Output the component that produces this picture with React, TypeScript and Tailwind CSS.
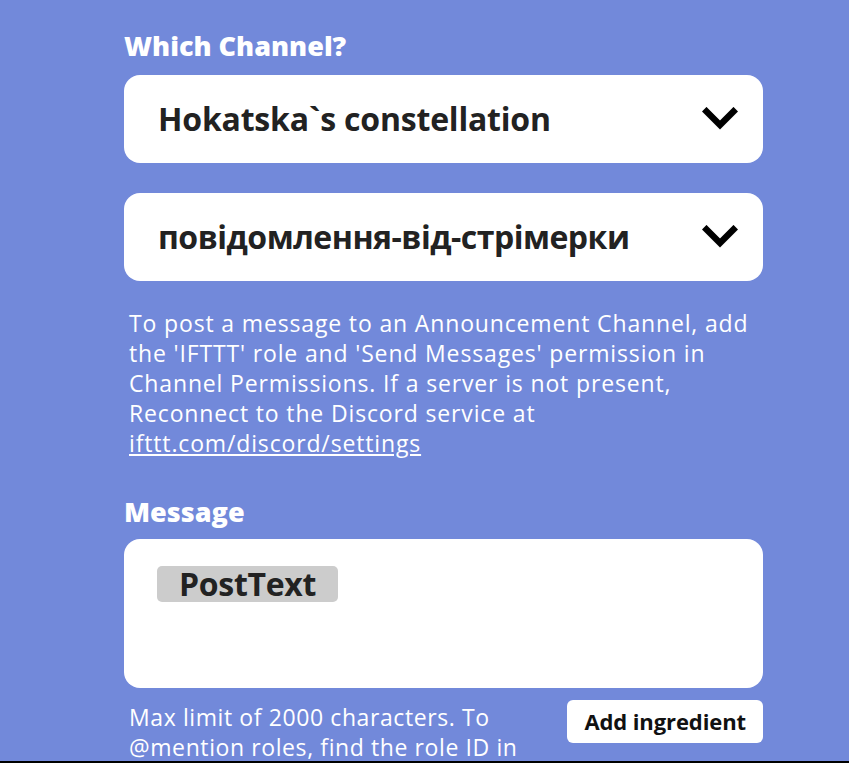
import React from "react";

const font = { fontFamily: "'Open Sans', 'Noto Sans', sans-serif" };

const Chevron = () => (
  <svg width="36" height="24" viewBox="0 0 36 24" fill="none">
    <path d="M4.5 4.5 L18 18 L31.5 4.5" stroke="#000" strokeWidth="6.5" strokeLinecap="square" />
  </svg>
);

const Select = ({ value, tight }: { value: string; tight?: boolean }) => (
  <div className="flex h-[88px] items-center justify-between rounded-2xl bg-white pl-[34px] pr-[25px]">
    <span
      className={
        tight
          ? "text-[32px] font-bold leading-none tracking-[-0.5px] text-[#222]"
          : "text-[32px] font-bold leading-none tracking-[-0.2px] text-[#222]"
      }
    >
      {value}
    </span>
    <Chevron />
  </div>
);

export default function App() {
  return (
    <div
      className="h-[763px] w-full overflow-hidden border-b-2 border-black bg-[#7289da]"
      style={font}
    >
      <div className="ml-[124px] w-[639px] pt-[30px]">
        <h2 className="mb-[14px] text-[27px] font-extrabold leading-[31px] text-white">
          Which Channel?
        </h2>
        <Select value="Hokatska`s constellation" />
        <div className="h-[30px]" />
        <Select value="повідомлення-від-стрімерки" tight />

        <p className="mt-[27px] w-[630px] pl-[5px] text-[23px] leading-[30px] tracking-[0.85px] text-white">
          To post a message to an Announcement Channel, add the 'IFTTT' role and 'Send Messages'
          permission in Channel Permissions. If a server is not present, Reconnect to the Discord
          service at{" "}
          <a className="underline" href="#">
            ifttt.com/discord/settings
          </a>
        </p>

        <h2 className="mt-[38px] mb-[12px] text-[27px] font-extrabold leading-[31px] text-white">
          Message
        </h2>
        <div className="h-[149px] rounded-2xl bg-white px-[33px] pt-[27px]">
          <span className="inline-block rounded-[5px] bg-[#cccccc] px-[22px] text-[32px] font-bold leading-[36px] tracking-[-0.3px] text-[#222]">
            PostText
          </span>
        </div>

        <div className="mt-[12px] flex items-start justify-between">
          <p className="w-[430px] pl-[5px] pt-[2px] text-[23px] leading-[30px] tracking-[0.6px] text-white">
            Max limit of 2000 characters. To @mention roles, find the role ID in
          </p>
          <button className="h-[43px] rounded-md bg-white px-[17px] text-[22px] font-bold tracking-[-0.1px] text-[#111]">
            Add ingredient
          </button>
        </div>
      </div>
    </div>
  );
}
